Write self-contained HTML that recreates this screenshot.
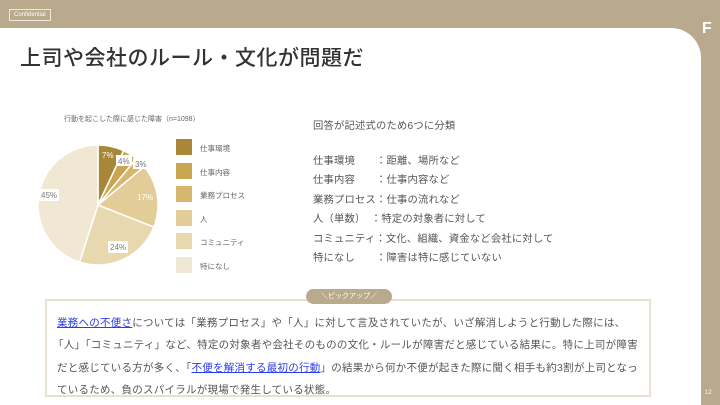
<!DOCTYPE html>
<html><head><meta charset="utf-8"><style>
*{margin:0;padding:0;box-sizing:border-box}
body{width:720px;height:405px;overflow:hidden;background:#b9aa8d;position:relative;font-family:"Liberation Sans","Noto Sans CJK JP",sans-serif;color:#444}
.panel{position:absolute;left:0;top:28px;width:701px;height:377px;background:#fff;border-top-right-radius:30px}
.conf{position:absolute;left:9px;top:9px;border:1px solid #efe8da;color:#fff;font-size:6px;padding:1px 4px;line-height:8px}
.logo{position:absolute;left:702px;top:20px;color:#fff;font-weight:bold;font-size:16px}
h1{position:absolute;left:20px;top:42px;font-size:21px;font-weight:500;color:#333;letter-spacing:0.5px}
.ct{position:absolute;left:64px;top:114px;font-size:7px;color:#666}
.lg{position:absolute;left:176px;width:16px;height:16px}
.ll{position:absolute;left:200px;font-size:7.5px;color:#666}
.rt{position:absolute;left:313px;font-size:10.3px;color:#555;white-space:pre;letter-spacing:0.2px}
.box{position:absolute;left:45px;top:299px;width:606px;height:98px;border:2px solid #e8e1d3}
.tag{position:absolute;left:306px;top:289px;width:86px;height:15px;border-radius:8px;background:#b9aa8d;color:#fff;font-size:7px;text-align:center;line-height:15px}
.tx{position:absolute;left:57px;font-size:10.5px;color:#555;white-space:nowrap;letter-spacing:0.25px}
a{color:#2a3cf0}
.pn{position:absolute;left:705px;top:390px;color:#fff;font-size:6px}
</style></head><body>
<div class="conf">Confidential</div>
<div class="logo">F</div>
<div class="panel"></div>
<h1>上司や会社のルール・文化が問題だ</h1>
<div class="ct">行動を起こした際に感じた障害（n=1098）</div>
<svg style="position:absolute;left:0;top:0" width="300" height="300">
<g stroke="#fff" stroke-width="1.5">
<path d="M98,205 L98,145 A60,60 0 0 1 123.6,150.7 Z" fill="#a88838"/>
<path d="M98,205 L123.6,150.7 A60,60 0 0 1 136.2,158.7 Z" fill="#c9a650"/>
<path d="M98,205 L136.2,158.7 A60,60 0 0 1 144.2,166.7 Z" fill="#d5b86e"/>
<path d="M98,205 L144.2,166.7 A60,60 0 0 1 153.8,227.1 Z" fill="#e2cc98"/>
<path d="M98,205 L153.8,227.1 A60,60 0 0 1 79.5,262.1 Z" fill="#e8d8b0"/>
<path d="M98,205 L79.5,262.1 A60,60 0 0 1 98,145 Z" fill="#f1e8d3"/>
</g>
<g font-size="8" font-family="Liberation Sans" fill="#fff">
<text x="102" y="158">7%</text>
<rect x="116" y="155" width="16" height="11" fill="#fff"/><text x="118" y="164" fill="#777">4%</text>
<rect x="133" y="158" width="16" height="11" fill="#fff"/><text x="135" y="167" fill="#777">3%</text>
<text x="137" y="200">17%</text>
<rect x="108" y="241" width="20" height="12" fill="#fff"/><text x="110" y="250" fill="#777">24%</text>
<rect x="39" y="189" width="20" height="12" fill="#fff"/><text x="41" y="198" fill="#777">45%</text>
</g></svg>
<div class="lg" style="top:139px;background:#a88838"></div><div class="ll" style="top:143px">仕事環境</div>
<div class="lg" style="top:163px;background:#c9a650"></div><div class="ll" style="top:167px">仕事内容</div>
<div class="lg" style="top:186px;background:#d5b86e"></div><div class="ll" style="top:190px">業務プロセス</div>
<div class="lg" style="top:210px;background:#e2cc98"></div><div class="ll" style="top:214px">人</div>
<div class="lg" style="top:233px;background:#e8d8b0"></div><div class="ll" style="top:237px">コミュニティ</div>
<div class="lg" style="top:257px;background:#f1e8d3"></div><div class="ll" style="top:261px">特になし</div>
<div class="rt" style="top:117px">回答が記述式のため6つに分類</div>
<div class="rt" style="top:152px">仕事環境　　：距離、場所など</div>
<div class="rt" style="top:171px">仕事内容　　：仕事内容など</div>
<div class="rt" style="top:191px">業務プロセス：仕事の流れなど</div>
<div class="rt" style="top:210px">人（単数）　：特定の対象者に対して</div>
<div class="rt" style="top:230px">コミュニティ：文化、組織、資金など会社に対して</div>
<div class="rt" style="top:249px">特になし　　：障害は特に感じていない</div>
<div class="box"></div>
<div class="tag">＼ピックアップ／</div>
<div class="tx" style="top:315px"><a href="#">業務への不便さ</a>については「業務プロセス」や「人」に対して言及されていたが、いざ解消しようと行動した際には、</div>
<div class="tx" style="top:337px;left:53px">「人」「コミュニティ」など、特定の対象者や会社そのものの文化・ルールが障害だと感じている結果に。特に上司が障害</div>
<div class="tx" style="top:360px">だと感じている方が多く、「<a href="#">不便を解消する最初の行動</a>」の結果から何か不便が起きた際に聞く相手も約3割が上司となっ</div>
<div class="tx" style="top:382px">ているため、負のスパイラルが現場で発生している状態。</div>
<div class="pn">12</div>
</body></html>
